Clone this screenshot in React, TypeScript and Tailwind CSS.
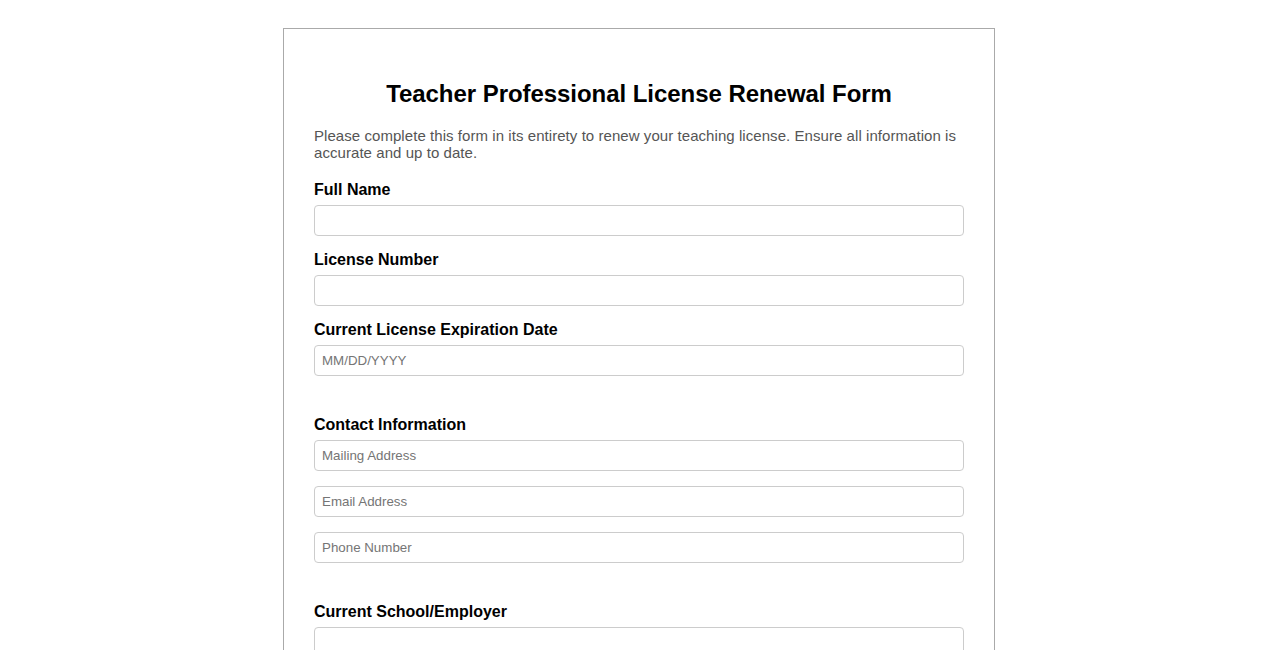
import React from 'react';

function Field({ label, placeholder }: { label: string; placeholder?: string }) {
  return (
    <div className="mb-[15px]">
      <label className="block text-[16px] font-bold leading-[18px] mb-[6px] text-black">{label}</label>
      <input
        type="text"
        placeholder={placeholder}
        className="block w-full h-[31px] border border-[#cccccc] rounded-[4px] px-[7px] text-[13.33px] placeholder:text-[#757575] outline-none"
      />
    </div>
  );
}

function PlainInput({ placeholder }: { placeholder: string }) {
  return (
    <input
      type="text"
      placeholder={placeholder}
      className="block w-full h-[31px] border border-[#cccccc] rounded-[4px] px-[7px] text-[13.33px] placeholder:text-[#757575] outline-none mb-[15px]"
    />
  );
}

export default function App() {
  return (
    <div className="min-h-screen bg-white pt-[28px] pb-10" style={{ fontFamily: '"Liberation Sans", Arial, sans-serif' }}>
      <div className="mx-auto w-[712px] border border-[#aaaaaa] px-[30px] pt-[51px] pb-[30px]">
        <h1 className="text-center text-[24px] font-bold leading-[28px] text-black tracking-[-0.05px]">
          Teacher Professional License Renewal Form
        </h1>
        <p className="mt-[19px] mb-[20px] text-[15px] leading-[17px] text-[#555555] tracking-[0.06px]">
          Please complete this form in its entirety to renew your teaching license. Ensure all information is
          accurate and up to date.
        </p>

        <Field label="Full Name" />
        <Field label="License Number" />
        <Field label="Current License Expiration Date" placeholder="MM/DD/YYYY" />

        <div className="mt-[40px]">
          <label className="block text-[16px] font-bold leading-[18px] mb-[6px] text-black">Contact Information</label>
          <PlainInput placeholder="Mailing Address" />
          <PlainInput placeholder="Email Address" />
          <PlainInput placeholder="Phone Number" />
        </div>

        <div className="mt-[40px]">
          <Field label="Current School/Employer" />
          <Field label="Position/Title" />
        </div>
      </div>
    </div>
  );
}
